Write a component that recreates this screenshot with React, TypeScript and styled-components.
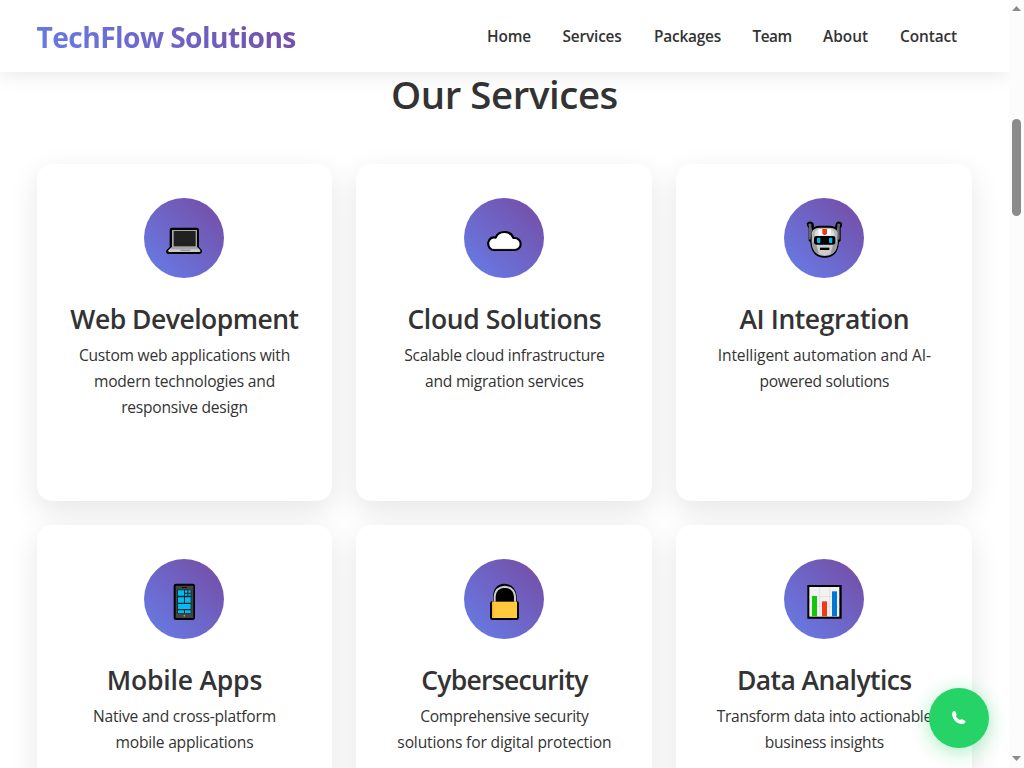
import React from "react";
import styled, { createGlobalStyle } from "styled-components";

const GlobalStyle = createGlobalStyle`
  * { box-sizing: border-box; }
  body {
    margin: 0;
    overflow: hidden;
    background: #fff;
    color: #333;
    font-family: "Segoe UI", "Open Sans", "Noto Sans", sans-serif;
    font-size: 15.6px;
    line-height: 26px;
  }
`;

const brandGradient = "linear-gradient(45deg, #667eea, #764ba2)";

const Window = styled.div`
  display: flex;
  width: 1024px;
  height: 768px;
  overflow: hidden;
`;

const Page = styled.div`
  position: relative;
  flex: 1;
  display: flex;
  flex-direction: column;
  overflow: hidden;
`;

const Header = styled.header`
  position: relative;
  z-index: 2;
  flex: none;
  height: 72px;
  padding: 0 52px 0 36.5px;
  display: flex;
  align-items: center;
  justify-content: space-between;
  background: #fff;
  box-shadow: 0 2px 20px rgba(0, 0, 0, 0.1);
`;

const Logo = styled.a`
  font-size: 28.2px;
  font-weight: 700;
  line-height: 46px;
  margin-top: 1px;
  letter-spacing: -0.59px;
  white-space: nowrap;
  color: transparent;
  background: ${brandGradient};
  background-clip: text;
  -webkit-background-clip: text;
`;

const Nav = styled.nav`
  display: flex;
  gap: 32px;
  padding-top: 2px;
`;

const NavLink = styled.a<{ $width: number; $tracking?: number }>`
  width: ${(p) => p.$width}px;
  font-size: 15.4px;
  font-weight: 560;
  white-space: nowrap;
  letter-spacing: ${(p) => p.$tracking ?? 0}px;
`;

const Services = styled.main`
  flex: none;
  width: 935.8px;
  margin-left: 36.5px;
`;

const Heading = styled.h2<{ $tracking?: number }>`
  margin: -2px 0 46px;
  height: 48px;
  text-align: center;
  font-size: 38.4px;
  font-weight: 540;
  line-height: 48px;
  letter-spacing: ${(p) => p.$tracking ?? 0}px;
`;

const Grid = styled.div`
  display: grid;
  grid-template-columns: repeat(3, 1fr);
  grid-auto-rows: 337px;
  gap: 24px;
`;

const Card = styled.article`
  display: flex;
  flex-direction: column;
  align-items: center;
  padding-top: 34px;
  border-radius: 15px;
  background: #fff;
  text-align: center;
  box-shadow: 0 10px 30px rgba(0, 0, 0, 0.1);
`;

const IconDisc = styled.div`
  width: 80px;
  height: 80px;
  margin-bottom: 24px;
  display: flex;
  align-items: center;
  justify-content: center;
  border-radius: 50%;
  background: ${brandGradient};
`;

const CardTitle = styled.h3<{ $tracking: number }>`
  margin: 0 0 6px;
  font-size: 26.5px;
  font-weight: 540;
  line-height: 34px;
  white-space: nowrap;
  letter-spacing: ${(p) => p.$tracking}px;
`;

const Line = styled.span<{ $tracking: number }>`
  display: block;
  white-space: nowrap;
  letter-spacing: ${(p) => p.$tracking}px;
`;

const CardText = styled.p`
  margin: 0;
`;

const CallButton = styled.button`
  position: absolute;
  right: 20px;
  bottom: 20px;
  z-index: 3;
  width: 60px;
  height: 60px;
  padding: 0;
  border: 0;
  border-radius: 50%;
  display: flex;
  align-items: center;
  justify-content: center;
  background: #25d366;
  box-shadow: 0 4px 20px rgba(37, 211, 102, 0.4);
`;

const ScrollBar = styled.div`
  flex: none;
  width: 15px;
  padding: 6px 3px 7px;
  display: flex;
  flex-direction: column;
  justify-content: space-between;
  background: #fcfcfc;
`;

const ScrollTrack = styled.div`
  flex: 1;
  padding-top: 108px;
`;

const ScrollThumb = styled.div`
  width: 9px;
  height: 97px;
  border-radius: 5px;
  background: #8b8b8b;
`;

const Arrow = styled.svg`
  display: block;
  width: 9px;
  height: 5px;
  fill: #8b8b8b;
`;

const Glyph = ({ children }: { children: React.ReactNode }) => (
  <svg width="44" height="44" viewBox="84 84 132 132">{children}</svg>
);

const Laptop = () => (
  <Glyph>
    <path d="M114 119h74q7 0 7 7v51l9 10q2 10-8 11h-92q-9-2-8-10l11-11v-51q0-7 7-7z" fill="#000" />
    <path d="M114 126h75v52h-75z" fill="#aaa" />
    <path d="M119 129h66v46h-66z" fill="#212121" />
    <path d="M113 178h77l9 9q2 5-3 5h-90q-5 0-3-5z" fill="#ccc" />
    <path d="M112 179h78l5 5h-88z" fill="#a5a5a5" />
    <path d="M137 185h34l-3 4h-27z" fill="#929292" />
  </Glyph>
);

const Cloud = () => (
  <Glyph>
    <path
      d="M120 186a17 19 0 1 1 5-37a28 26 0 0 1 53 1q2 0 4 0a18 18 0 0 1 0 36z"
      fill="#fff" stroke="#000" strokeWidth="6.500" strokeLinejoin="round"
    />
    <path d="M114 182h72" stroke="#d8d8d8" strokeWidth="2" />
  </Glyph>
);

const Robot = () => (
  <Glyph>
    <path
      d="M98 106q8-10 20-1l3 12q7-4 17-4h28q10 0 17 4l3-12q10-9 18 1v9l-4 5v38l-5 5q-3 46-43 46t-43-46l-5-5v-38l-4-5z"
      fill="#000"
    />
    <path d="M103 107h9v8l2 11-5 31-4-4v-35zM199 107h-9v8l-2 11 5 31 4-4v-35z" fill="#666" />
    <path d="M113 134q4-15 26-15h26q22 0 26 15v26q-1 43-39 44-38-1-39-44z" fill="#b8b8b8" />
    <path d="M123 135q4-12 18-12h22q14 0 18 12v10h-58z" fill="#ddd" />
    <path d="M134 123h36v19h-36z" fill="#fff" />
    <path d="M145 123h14v13l-4 5h-6l-4-5z" fill="#f03a17" />
    <path d="M113 158l13 13h52l13-13q0 28-15 38h-46q-17-12-17-38z" fill="#999" />
    <path d="M127 170h50l-7 25q-18 13-36 0z" fill="#ccc" />
    <rect x="120" y="144" width="64" height="26" rx="7" fill="#000" />
    <rect x="129" y="149" width="10" height="16" rx="3" fill="#00bcf2" />
    <rect x="165" y="149" width="10" height="16" rx="3" fill="#00bcf2" />
    <path d="M138 179h28v7h-28z" fill="#000" />
  </Glyph>
);

const Mobile = () => (
  <Glyph>
    <rect x="119" y="104" width="64" height="109" rx="7" fill="#000" />
    <rect x="125" y="110" width="53" height="97" rx="2" fill="#444" />
    <path d="M144 114h15v3h-15z" fill="#111" />
    <path d="M130 122h42v71h-42z" fill="#15242a" />
    <path
      d="M132 124h18v16h-18zM153 124h7v7h-7zM163 124h7v7h-7zM153 134h7v6h-7zM163 134h7v6h-7zM132 145h18v16h-18zM153 145h17v16h-17zM132 165h38v15h-38zM132 184h18v8h-18zM153 184h17v8h-17z"
      fill="#00bcf2"
    />
    <circle cx="151" cy="200" r="2.5" fill="#999" />
  </Glyph>
);

const Lock = () => (
  <Glyph>
    <path d="M117 156v-15q2-35 34-37 33 2 37 37v15q7 1 7 7v43q0 7-7 7h-73q-7 0-7-7v-43q0-6 9-7z" fill="#000" />
    <path d="M122 158v-16q2-27 30-29 28 2 31 29v16" fill="none" stroke="#ccc" strokeWidth="6" />
    <path d="M130 158v-14q2-21 22-23 20 2 23 23v14z" fill="#000" />
    <path d="M114 158h75v49h-75z" fill="#ffc83d" />
    <path d="M114 158h5v49h-5z" fill="#ffb32c" />
  </Glyph>
);

const Chart = () => (
  <Glyph>
    <path d="M100 108h103v101h-103z" fill="#000" />
    <path d="M106 114h90v89h-90z" fill="#f2f2f2" />
    <path d="M106 143h90M106 173h90M137 114v89M167 114v89" stroke="#ddd" strokeWidth="2.5" />
    <path d="M114 141h15v61h-15z" fill="#16c60c" />
    <path d="M144 157h15v45h-15z" fill="#f03a17" />
    <path d="M174 127h15v75h-15z" fill="#0078d7" />
  </Glyph>
);

const navItems: [string, number, number][] = [
  ["Home", 43.5, -0.1],
  ["Services", 59.5, -0.17],
  ["Packages", 66.5, -0.2],
  ["Team", 38.5, -0.5],
  ["About", 45, 0],
  ["Contact", 57, -0.08],
];

const services: { icon: React.ReactNode; title: string; tracking: number; lines: [string, number][] }[] = [
  {
    icon: <Laptop />, title: "Web Development", tracking: -0.5,
    lines: [["Custom web applications with", -0.23], ["modern technologies and", -0.22], ["responsive design", -0.24]],
  },
  {
    icon: <Cloud />, title: "Cloud Solutions", tracking: -0.36,
    lines: [["Scalable cloud infrastructure", -0.26], ["and migration services", -0.25]],
  },
  {
    icon: <Robot />, title: "AI Integration", tracking: -0.42,
    lines: [["Intelligent automation and AI-", -0.1], ["powered solutions", -0.29]],
  },
  {
    icon: <Mobile />, title: "Mobile Apps", tracking: -0.2,
    lines: [["Native and cross-platform", -0.23], ["mobile applications", -0.2]],
  },
  {
    icon: <Lock />, title: "Cybersecurity", tracking: -0.72,
    lines: [["Comprehensive security", -0.3], ["solutions for digital protection", -0.15]],
  },
  {
    icon: <Chart />, title: "Data Analytics", tracking: -0.57,
    lines: [["Transform data into actionable", -0.31], ["business insights", -0.26]],
  },
];

export default function App() {
  return (
    <Window>
      <GlobalStyle />
      <Page>
        <Header>
          <Logo>TechFlow Solutions</Logo>
          <Nav>
            {navItems.map(([label, width, tracking]) => (
              <NavLink key={label} $width={width} $tracking={tracking}>{label}</NavLink>
            ))}
          </Nav>
        </Header>
        <Services>
          <Heading $tracking={-0.42}>Our Services</Heading>
          <Grid>
            {services.map((s) => (
              <Card key={s.title}>
                <IconDisc>{s.icon}</IconDisc>
                <CardTitle $tracking={s.tracking}>{s.title}</CardTitle>
                <CardText>
                  {s.lines.map(([text, tracking]) => (
                    <Line key={text} $tracking={tracking}>{text}</Line>
                  ))}
                </CardText>
              </Card>
            ))}
          </Grid>
        </Services>
        <CallButton aria-label="Call us">
          <svg width="14" height="14" viewBox="0 0 14 14">
            <path
              d="M1 .5Q2.600-.5 3.600 1l.9 2q.4 1-.8 2 1.500 2.800 4.300 4.100 1-1.300 2.100-.8l2.600 1.100q1.300.7.500 2-1.300 2.100-4 1.600Q1.300 11.500.1 4 0 1.500 1 .5z"
              fill="#fff"
            />
          </svg>
        </CallButton>
      </Page>
      <ScrollBar>
        <Arrow viewBox="0 0 9 5"><path d="M0 5L4.500 0 9 5z" /></Arrow>
        <ScrollTrack><ScrollThumb /></ScrollTrack>
        <Arrow viewBox="0 0 9 5"><path d="M0 0L4.500 5 9 0z" /></Arrow>
      </ScrollBar>
    </Window>
  );
}
